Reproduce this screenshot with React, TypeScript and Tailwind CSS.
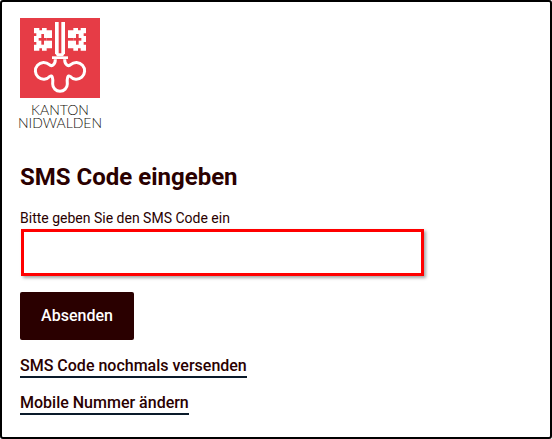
function Logo() {
  return (
    <svg width="80" height="80" viewBox="0 0 240 240" className="block">
      <rect width="240" height="240" fill="#e63c46" />
      <g fill="#fff">
        <rect x="105" y="12" width="11" height="96" />
        <rect x="124" y="12" width="11" height="96" />
        <path d="M105 106h30l-6 9h-18z" />
        <rect x="96" y="115" width="48" height="8" />
        <path d="M42 30h16v7h8v-7h14v7h16v54H80v7H66v-7h-8v7H42V80h7v-8h-7V54h7v-8h-7z" />
        <path d="M198 30h-16v7h-8v-7h-14v7h-16v54h16v7h14v-7h8v7h16V80h-7v-8h7V54h-7v-8h7z" />
      </g>
      <g fill="#e63c46">
        <rect x="64" y="48" width="8" height="32" />
        <rect x="56" y="60" width="24" height="8" />
        <rect x="80" y="60" width="16" height="8" />
        <rect x="168" y="48" width="8" height="32" />
        <rect x="160" y="60" width="24" height="8" />
        <rect x="144" y="60" width="16" height="8" />
      </g>
      <path
        d="M106 124C106 142 94 146 88 140A25 25 0 1 0 90 175C96 170 100 180 98 198A22 22 0 0 0 142 198C140 180 144 170 150 175A25 25 0 1 0 152 140C146 146 134 142 134 124"
        fill="none"
        stroke="#fff"
        strokeWidth="9"
      />
    </svg>
  );
}

export default function App() {
  return (
    <div className="h-[439px] w-[552px] overflow-hidden rounded-[3px] border-2 border-black bg-white pl-[18px] pt-4 font-['Roboto',sans-serif] text-[#2a0000]">
      <Logo />
      <div className="mt-[5px] flex w-[86px] -translate-x-[3px] flex-col items-center font-['Lato',sans-serif] text-[14px] font-light leading-[13px] text-[#14100a]">
        <div>KANTON</div>
        <div>NIDWALDEN</div>
      </div>
      <h1 className="mt-[34px] text-2xl leading-7 font-bold">SMS Code eingeben</h1>
      <label className="mt-[18px] block text-sm leading-[18px]">Bitte geben Sie den SMS Code ein</label>
      <div className="mt-[2px] ml-px h-[47px] w-[403px] border-[3px] border-[#ff0000] bg-white shadow-[2px_2px_3px_rgba(0,0,0,0.35)]" />
      <button className="mt-4 block h-12 w-[114px] rounded-[2px] bg-[#2a0000] text-base font-medium text-white">Absenden</button>
      <div className="mt-[14px]">
        <a className="inline-block border-b-2 border-[#0a1a2a] text-base leading-5 font-medium">SMS Code nochmals versenden</a>
      </div>
      <div className="mt-[13px]">
        <a className="inline-block border-b-2 border-[#0a1a2a] text-base leading-5 font-medium">Mobile Nummer ändern</a>
      </div>
    </div>
  );
}
